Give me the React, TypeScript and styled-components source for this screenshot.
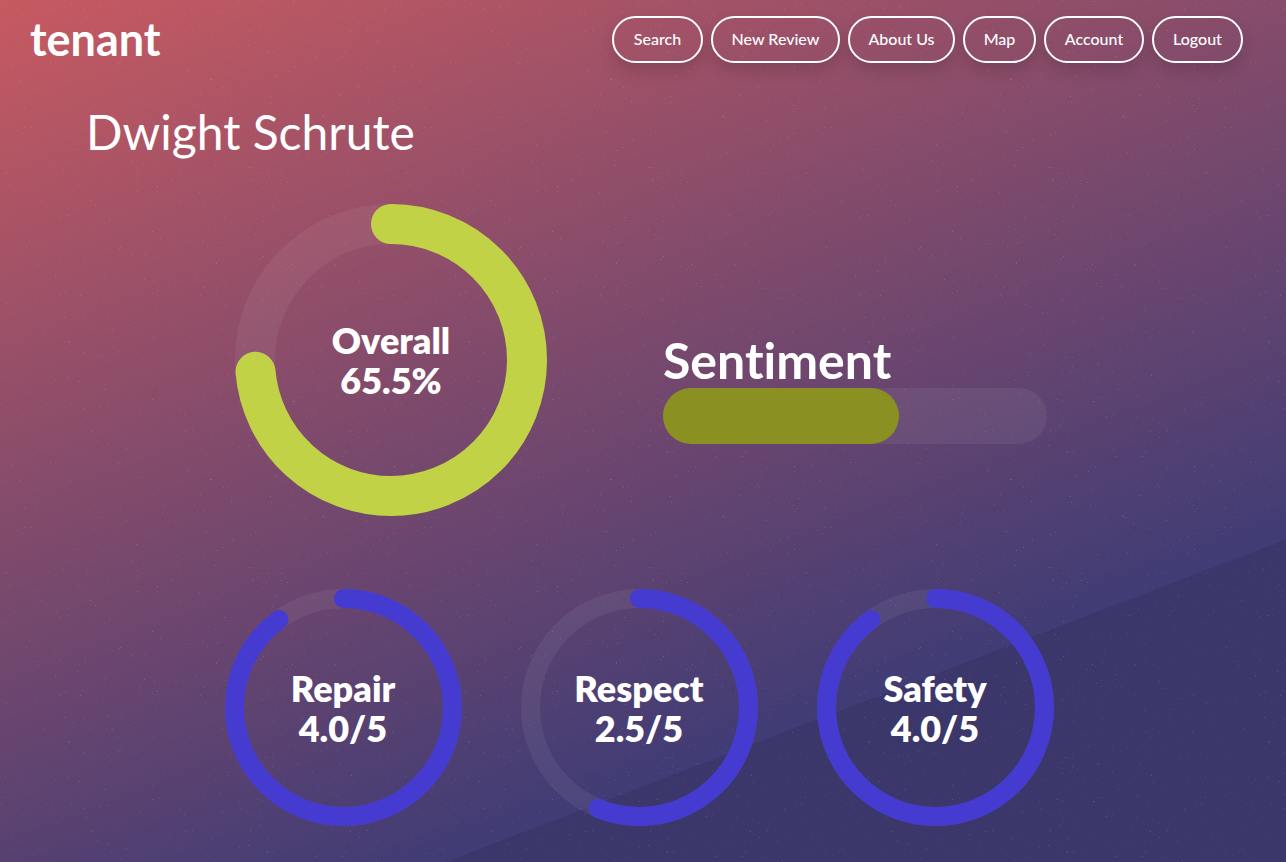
import React from "react";
import styled, { createGlobalStyle } from "styled-components";

const GlobalStyle = createGlobalStyle`
  *, *::before, *::after { box-sizing: border-box; }
  body {
    margin: 0;
    color: #fff;
    font-family: Lato, "Open Sans", sans-serif;
    font-variant-ligatures: none;
  }
`;

const Page = styled.div`
  position: relative;
  isolation: isolate;
  min-height: 100vh;
  background: linear-gradient(159deg, #c75a61 0%, #403c75 76.2%, #3c376a 76.2%, #3c376a 100%);
`;

const Stars = styled.svg`
  position: absolute;
  inset: 0;
  z-index: -1;
  width: 100%;
  height: 100%;
`;

const Header = styled.header`
  display: flex;
  flex-wrap: wrap;
  align-items: flex-start;
  justify-content: space-between;
  padding: 16px 43px 0 30px;
`;

const Brand = styled.a`
  color: inherit;
  font-size: 45px;
  font-weight: 700;
  line-height: 47px;
  text-decoration: none;
`;

const Nav = styled.nav`
  display: flex;
  flex-wrap: wrap;
  gap: 8px;
`;

const NavButton = styled.button<{ $width: number }>`
  width: ${(p) => p.$width}px;
  height: 47px;
  padding: 0 0 2px;
  border: 2px solid #fff;
  border-radius: 24px;
  background: transparent;
  box-shadow: 0 8px 16px rgba(0, 0, 0, 0.14);
  color: inherit;
  font: inherit;
  font-size: 16px;
  font-weight: 500;
  cursor: pointer;
`;

const Title = styled.h1`
  margin: 37px 86px 0;
  font-size: 48px;
  font-weight: 400;
  line-height: 64px;
`;

const Scores = styled.main`
  max-width: 896px;
  margin: 0 auto;
  padding: 40px 8px 32px 0;
`;

const Summary = styled.section`
  display: flex;
  flex-wrap: wrap;
  align-items: center;
  gap: 40px 116px;
  padding-left: 40px;
`;

const Categories = styled.section`
  display: flex;
  flex-wrap: wrap;
  justify-content: space-around;
  margin-top: 73px;
`;

const Gauge = styled.div`
  display: grid;
  place-items: center;
  > * { grid-area: 1 / 1; }
`;

const GaugeArc = styled.svg`
  display: block;
  fill: none;
`;

const GaugeText = styled.h2`
  margin: 0;
  font-size: 36px;
  font-weight: 800;
  line-height: 40px;
  text-align: center;
`;

const Line = styled.span`
  display: block;
`;

const Sentiment = styled.div`
  flex: 0 1 384px;
  padding-top: 56px;
`;

const SentimentTitle = styled.h2`
  margin: 0;
  font-size: 50px;
  font-weight: 700;
  line-height: 56px;
`;

const Track = styled.div`
  height: 56px;
  border-radius: 28px;
  background: rgba(255, 255, 255, 0.06);
`;

const Fill = styled.div`
  height: 100%;
  border-radius: 28px;
  background: #8a9122;
`;

const links = [
  { label: "Search", width: 91 },
  { label: "New Review", width: 129 },
  { label: "About Us", width: 107 },
  { label: "Map", width: 73 },
  { label: "Account", width: 100 },
  { label: "Logout", width: 91 },
];

const categories = [
  { label: "Repair", score: 4 },
  { label: "Respect", score: 2.5 },
  { label: "Safety", score: 4 },
];

const sentiment = 61.5;

// Faint specks scattered over one repeating tile.
const TILE = 400;
let seed = 20;
const random = () => {
  seed = (seed * 16807) % 2147483647;
  return seed / 2147483647;
};
const specks = Array.from({ length: 1800 }, () => ({
  x: Math.floor(random() * TILE),
  y: Math.floor(random() * TILE),
  opacity: 0.02 + random() ** 3 * 0.13,
}));

// The arcs sweep slightly further than the plain share of the circle.
const SWEEP = 1.124;

function Ring({ label, value, share, size, stroke, color }: {
  label: string;
  value: string;
  share: number;
  size: number;
  stroke: number;
  color: string;
}) {
  const c = size / 2;
  const r = (size - stroke) / 2;
  return (
    <Gauge>
      <GaugeArc width={size} height={size} viewBox={`0 0 ${size} ${size}`} aria-hidden="true">
        <circle cx={c} cy={c} r={r} stroke="#fff" strokeOpacity={0.06} strokeWidth={stroke} />
        <circle
          cx={c}
          cy={c}
          r={r}
          stroke={color}
          strokeWidth={stroke}
          strokeLinecap="round"
          pathLength={100}
          strokeDasharray={`${share * SWEEP * 100} 100`}
          transform={`rotate(-90 ${c} ${c})`}
        />
      </GaugeArc>
      <GaugeText>
        <Line>{label}</Line>
        <Line>{value}</Line>
      </GaugeText>
    </Gauge>
  );
}

export default function App() {
  return (
    <Page>
      <GlobalStyle />
      <Stars aria-hidden="true">
        <defs>
          <pattern id="specks" width={TILE} height={TILE} patternUnits="userSpaceOnUse">
            {specks.map((s, i) => (
              <rect key={i} x={s.x} y={s.y} width="1" height="1" fill="#fff" opacity={s.opacity} />
            ))}
          </pattern>
        </defs>
        <rect width="100%" height="100%" fill="url(#specks)" />
      </Stars>
      <Header>
        <Brand href="#">tenant</Brand>
        <Nav>
          {links.map((l) => (
            <NavButton key={l.label} type="button" $width={l.width}>{l.label}</NavButton>
          ))}
        </Nav>
      </Header>
      <Title>Dwight Schrute</Title>
      <Scores>
        <Summary>
          <Ring label="Overall" value="65.5%" share={0.655} size={312} stroke={40} color="#c1d247" />
          <Sentiment>
            <SentimentTitle>Sentiment</SentimentTitle>
            <Track>
              <Fill style={{ width: `${sentiment}%` }} />
            </Track>
          </Sentiment>
        </Summary>
        <Categories>
          {categories.map((c) => (
            <Ring
              key={c.label}
              label={c.label}
              value={`${c.score.toFixed(1)}/5`}
              share={c.score / 5}
              size={237}
              stroke={19}
              color="#463bd0"
            />
          ))}
        </Categories>
      </Scores>
    </Page>
  );
}
